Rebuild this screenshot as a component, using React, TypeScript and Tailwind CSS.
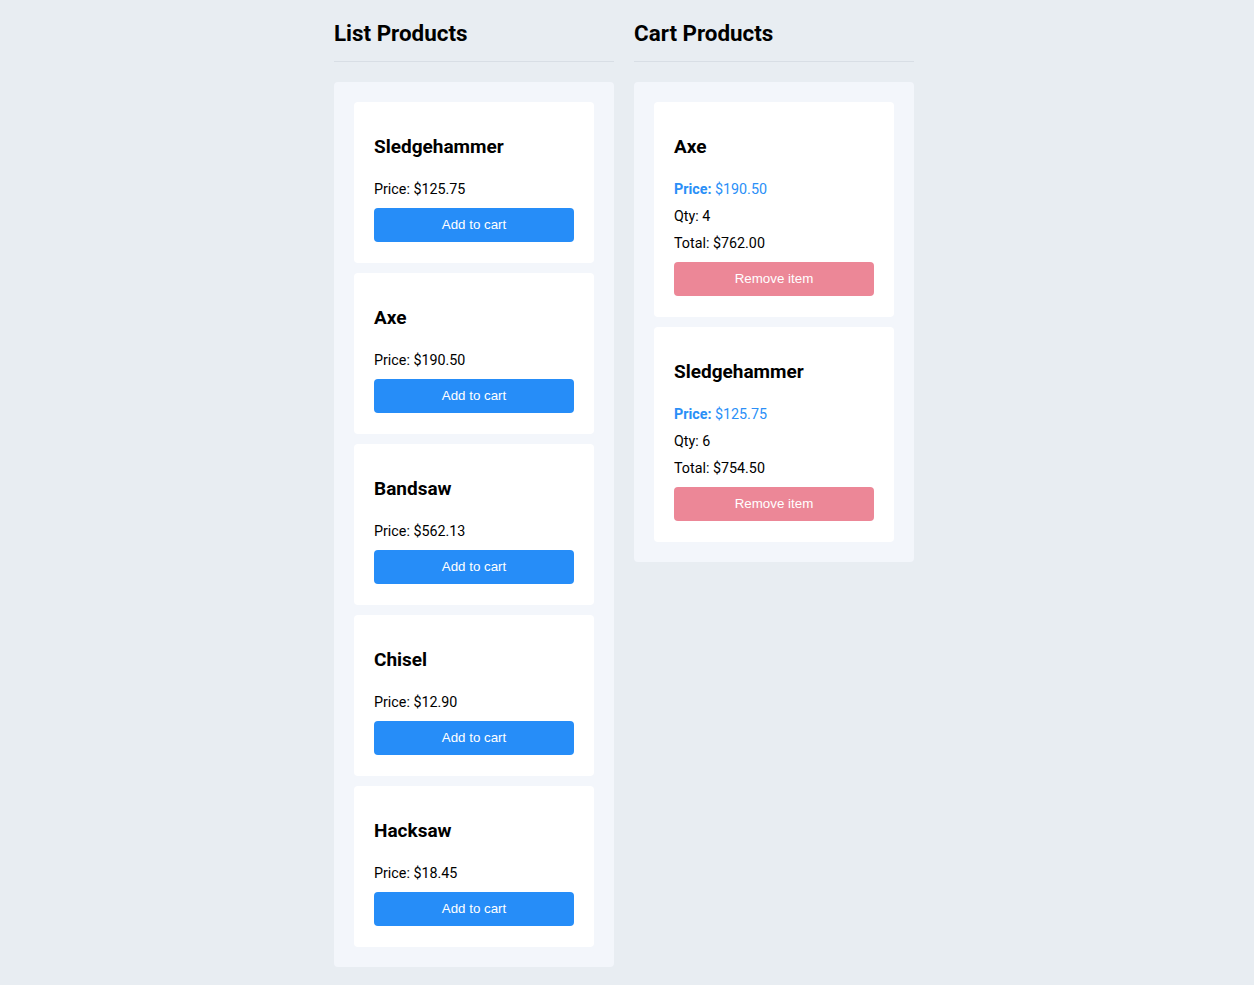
const products = [
  { name: "Sledgehammer", price: 125.75 },
  { name: "Axe", price: 190.5 },
  { name: "Bandsaw", price: 562.13 },
  { name: "Chisel", price: 12.9 },
  { name: "Hacksaw", price: 18.45 },
];

const cart = [
  { name: "Axe", price: 190.5, qty: 4 },
  { name: "Sledgehammer", price: 125.75, qty: 6 },
];

const money = (n: number) => "$" + n.toFixed(2);

const Heading = ({ children }: { children: string }) => (
  <h2 className="pt-[19px] pb-[14px] text-[22.4px] leading-[28px] font-bold text-black border-b border-[#d8dee5]">
    {children}
  </h2>
);

export default function App() {
  return (
    <div className="min-h-[985px] bg-[#e8edf2] font-['Roboto',sans-serif]">
      <div className="w-[586px] mx-auto flex gap-5 items-start">
        <div className="w-[280px]">
          <Heading>List Products</Heading>
          <div className="mt-5 bg-[#f3f6fb] rounded p-5 flex flex-col gap-[10px]">
            {products.map((p) => (
              <div key={p.name} className="bg-white rounded px-5 pt-5 pb-[21px]">
                <h3 className="mt-[14px] text-[19px] leading-[22px] font-bold text-black">{p.name}</h3>
                <p className="mt-[21px] text-[14.3px] leading-[20px] text-black">Price: {money(p.price)}</p>
                <button className="mt-[9px] w-full h-[34px] rounded bg-[#268df8] text-white text-[13.33px] font-['Liberation_Sans',Arial,sans-serif]">
                  Add to cart
                </button>
              </div>
            ))}
          </div>
        </div>
        <div className="w-[280px]">
          <Heading>Cart Products</Heading>
          <div className="mt-5 bg-[#f3f6fb] rounded p-5 flex flex-col gap-[10px]">
            {cart.map((c) => (
              <div key={c.name} className="bg-white rounded px-5 pt-5 pb-[21px]">
                <h3 className="mt-[14px] text-[19px] leading-[22px] font-bold text-black">{c.name}</h3>
                <p className="mt-[21px] text-[14.3px] leading-[20px] text-[#2a8ff7]">
                  <span className="font-bold">Price:</span> {money(c.price)}
                </p>
                <p className="mt-[7px] text-[14.3px] leading-[20px] text-black">Qty: {c.qty}</p>
                <p className="mt-[7px] text-[14.3px] leading-[20px] text-black">Total: {money(c.price * c.qty)}</p>
                <button className="mt-[9px] w-full h-[34px] rounded bg-[#ec8797] text-white text-[13.33px] font-['Liberation_Sans',Arial,sans-serif]">
                  Remove item
                </button>
              </div>
            ))}
          </div>
        </div>
      </div>
    </div>
  );
}
